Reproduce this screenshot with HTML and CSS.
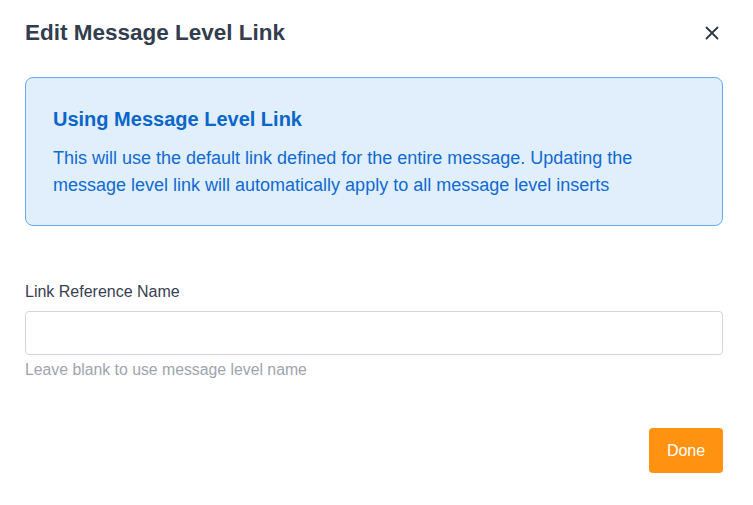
FILE: index.html
```html
<!DOCTYPE html>
<html lang="en">
<head>
    <meta charset="UTF-8">
    <meta name="viewport" content="width=device-width, initial-scale=1.0">
    <title>Edit Message Level Link</title>
    <link rel="stylesheet" href="styles.css">
</head>
<body>
    <div class="modal">
        <div class="modal-header">
            <h2>Edit Message Level Link</h2>
            <button class="close-btn" aria-label="Close">
                <svg width="14" height="14" viewBox="0 0 14 14">
                    <path d="M1.5 1.5L12.5 12.5M12.5 1.5L1.5 12.5" stroke="#2d3748" stroke-width="1.8" stroke-linecap="round"/>
                </svg>
            </button>
        </div>

        <div class="info-box">
            <h3>Using Message Level Link</h3>
            <p>This will use the default link defined for the entire message. Updating the message level link will automatically apply to all message level inserts</p>
        </div>

        <div class="field">
            <label for="ref-name">Link Reference Name</label>
            <input type="text" id="ref-name">
            <div class="hint">Leave blank to use message level name</div>
        </div>

        <div class="actions">
            <button class="done-btn">Done</button>
        </div>
    </div>
</body>
</html>
```

FILE: styles.css
```css
body, html {
    margin: 0;
    padding: 0;
    background-color: #fff;
    font-family: "Liberation Sans", Arial, sans-serif;
}
.modal {
    width: 698px;
    padding: 0 25px;
}
.modal-header {
    display: flex;
    justify-content: space-between;
    align-items: center;
    height: 66px;
}
.modal-header h2 {
    margin: 0;
    font-size: 22.5px;
    line-height: 26px;
    font-weight: bold;
    color: #323d4e;
}
.close-btn {
    border: none;
    background: none;
    padding: 0;
    margin-right: 4px;
    display: flex;
    cursor: pointer;
}
.info-box {
    margin-top: 11px;
    background-color: #e1effd;
    border: 1px solid #63a9f5;
    border-radius: 8px;
    padding: 29px 27px 26px;
    color: #0f6ad1;
}
.info-box h3 {
    margin: 0 0 14px;
    font-size: 20px;
    line-height: 24px;
    font-weight: bold;
    color: #0a66c9;
}
.info-box p {
    margin: 0;
    font-size: 18px;
    line-height: 27px;
}
.field {
    margin-top: 57px;
}
.field label {
    display: block;
    font-size: 16px;
    line-height: 18px;
    color: #374151;
    margin-bottom: 10px;
}
.field input {
    display: block;
    width: 100%;
    box-sizing: border-box;
    height: 44px;
    border: 1px solid #d4d4dc;
    border-radius: 4px;
    padding: 0 12px;
    font-size: 16px;
    font-family: inherit;
}
.hint {
    margin-top: 6px;
    font-size: 15.8px;
    line-height: 18px;
    color: #a0a4ae;
}
.actions {
    display: flex;
    justify-content: flex-end;
    margin-top: 49px;
}
.done-btn {
    background-color: #ff9211;
    color: #fff;
    border: none;
    border-radius: 4px;
    width: 74px;
    height: 45px;
    font-size: 16px;
    font-family: inherit;
    cursor: pointer;
}
```
